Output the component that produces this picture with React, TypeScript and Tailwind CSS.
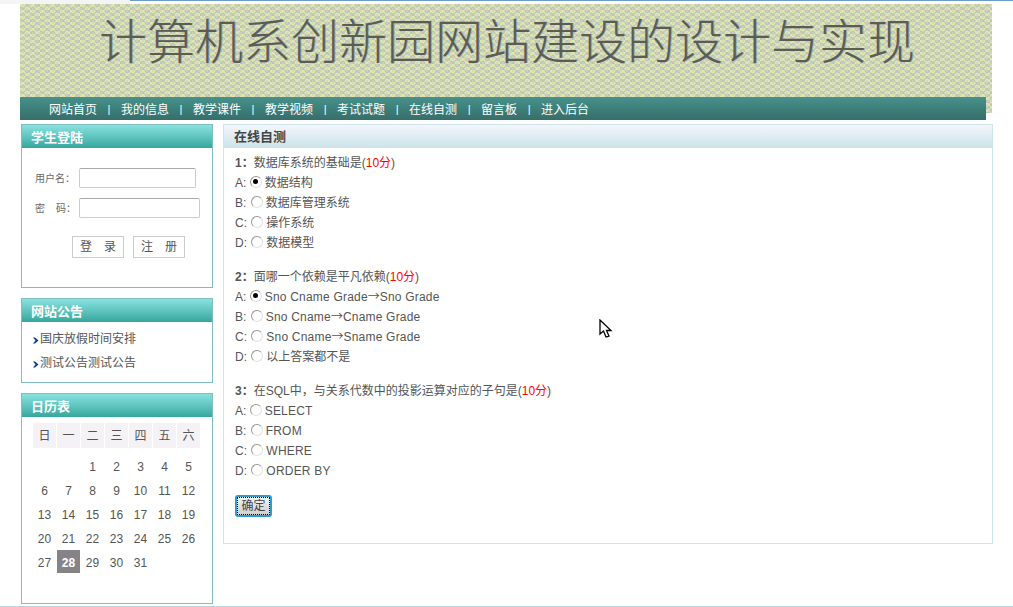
import type { ReactNode } from "react";

const font = "font-['Liberation_Sans','Noto_Sans_CJK_SC',sans-serif]";

const navItems = ["网站首页", "我的信息", "教学课件", "教学视频", "考试试题", "在线自测", "留言板", "进入后台"];

const questions = [
  {
    no: "1",
    title: "数据库系统的基础是",
    options: [
      ["A", "数据结构"],
      ["B", "数据库管理系统"],
      ["C", "操作系统"],
      ["D", "数据模型"],
    ],
  },
  {
    no: "2",
    title: "面哪一个依赖是平凡依赖",
    options: [
      ["A", "Sno Cname Grade→Sno Grade"],
      ["B", "Sno Cname→Cname Grade"],
      ["C", "Sno Cname→Sname Grade"],
      ["D", "以上答案都不是"],
    ],
  },
  {
    no: "3",
    title: "在SQL中，与关系代数中的投影运算对应的子句是",
    options: [
      ["A", "SELECT"],
      ["B", "FROM"],
      ["C", "WHERE"],
      ["D", "ORDER BY"],
    ],
  },
];

const weekDays = ["日", "一", "二", "三", "四", "五", "六"];
const days = [null, null, ...Array.from({ length: 31 }, (_, i) => i + 1)];

function SidePanel({ title, className, children }: { title: string; className: string; children: ReactNode }) {
  return (
    <section className={`border border-[#7fbfbf] ${className}`}>
      <h2 className="h-[23px] pl-[9px] text-[13px] leading-[26px] font-bold text-white bg-gradient-to-b from-[#88e2e0] to-[#33a89e]">
        {title}
      </h2>
      {children}
    </section>
  );
}

function Radio({ checked }: { checked?: boolean }) {
  return (
    <span className="inline-flex w-[12px] h-[12px] mr-[3px] -translate-y-[2px] rounded-full border border-[#999999] border-b-[#e2e2e2] border-r-[#e2e2e2] bg-white items-center justify-center align-middle">
      {checked && <span className="block w-[5px] h-[5px] rounded-full bg-black" />}
    </span>
  );
}

export default function App() {
  return (
    <div className={`relative flex flex-col min-h-[607px] bg-white text-[12px] text-[#555] ${font}`}>
      {/* top edge */}
      <div className="flex h-[4px]">
        <div className="w-[130px] bg-[#f4f4f4]" />
        <div className="flex-1 border-t-[1px] border-[#6f9cc2]" />
      </div>

      {/* banner */}
      <div className="ml-[20px] w-[972px] h-[109px] pl-[79px] pt-[11px] text-[48px] leading-[56px] font-light whitespace-nowrap text-[#5c5b54] [text-shadow:1px_0_0_rgba(90,130,170,0.45)] bg-[repeating-conic-gradient(rgba(185,185,190,0.5)_0_25%,rgba(220,236,170,0.5)_0_50%),repeating-conic-gradient(#c8ccb8_0_25%,#dfe6b4_0_50%)] bg-[length:10px_6px,4px_4px]">
        计算机系创新园网站建设的设计与实现
      </div>

      {/* nav */}
      <nav className="relative -mt-[16px] ml-[20px] w-[966px] h-[23px] pl-[29px] pt-[2px] flex items-center text-white bg-gradient-to-b from-[#46928b] to-[#366e6a]">
        {navItems.map((item, i) => (
          <span key={item} className="flex items-center">
            <span>{item}</span>
            {i < navItems.length - 1 && <span className="w-[24px] text-center text-[11px]">|</span>}
          </span>
        ))}
      </nav>

      <div className="flex mt-[4px] ml-[21px]">
        {/* left column */}
        <aside className="w-[192px] flex flex-col gap-[10px]">
          <SidePanel title="学生登陆" className="h-[164px]">
            <div className="pt-[20px] pl-[13px]">
              <div className="flex items-center h-[20px]">
                <span className="w-[44px] text-[10px] text-[#666]">用户名：</span>
                <input className="w-[117px] h-[20px] border border-[#cccccc] border-t-[#aaaaaa] rounded-[2px] bg-white" />
              </div>
              <div className="flex items-center h-[20px] mt-[10px]">
                <span className="w-[44px] text-[10px] text-[#666] whitespace-pre">密    码：</span>
                <input className="w-[121px] h-[20px] border border-[#cccccc] border-t-[#aaaaaa] rounded-[2px] bg-white" />
              </div>
              <div className="flex gap-[9px] mt-[18px] ml-[37px]">
                <button className="w-[52px] h-[22px] border border-[#cccccc] bg-white text-[#555] whitespace-pre">登　录</button>
                <button className="w-[52px] h-[22px] border border-[#cccccc] bg-white text-[#555] whitespace-pre">注　册</button>
              </div>
            </div>
          </SidePanel>

          <SidePanel title="网站公告" className="h-[85px]">
            <ul className="pt-[5px] pl-[11px]">
              {["国庆放假时间安排", "测试公告测试公告"].map((text) => (
                <li key={text} className="flex items-center h-[24px]">
                  <svg width="6" height="7" viewBox="0 0 6 7" className="mr-[1px] mt-[3px]">
                    <path d="M0 0.5 L2 0.5 L5.5 3.5 L2 6.5 L0 6.5 L2.5 3.5 Z" fill="#0a3d91" />
                  </svg>
                  {text}
                </li>
              ))}
            </ul>
          </SidePanel>

          <SidePanel title="日历表" className="h-[211px]">
            <div className="pt-[6px] pl-[11px]">
              <div className="grid grid-cols-[repeat(7,23px)] gap-[1px]">
                {weekDays.map((d) => (
                  <div key={d} className="h-[25px] flex items-center justify-center bg-[#f5f2f6] text-[#555]">
                    {d}
                  </div>
                ))}
              </div>
              <div className="grid grid-cols-[repeat(7,23px)] auto-rows-[23px] gap-[1px] mt-[6px]">
                {days.map((d, i) => (
                  <div
                    key={i}
                    className={`flex items-center justify-center pt-[2px] ${d === 28 ? "bg-[#858385] text-white font-bold" : ""}`}
                  >
                    {d}
                  </div>
                ))}
              </div>
            </div>
          </SidePanel>
        </aside>

        {/* main panel */}
        <main className="ml-[10px] w-[770px] h-[420px] border border-[#cfe5ea]">
          <h2 className="h-[23px] pl-[10px] text-[13px] leading-[24px] font-bold text-[#444] bg-gradient-to-b from-[#f3f6fc] to-[#cbe3e9]">
            在线自测
          </h2>
          <form className="pt-[5px] pl-[11px]">
            {questions.map((q) => (
              <div key={q.no} className="mb-[14px]">
                <p className="h-[20px] leading-[20px]">
                  <b>{q.no}：</b>
                  {q.title}
                  <span>(</span>
                  <span className="text-[#f00]">10分</span>
                  <span>)</span>
                </p>
                {q.options.map(([letter, text], i) => (
                  <div key={letter} className="h-[20px] leading-[20px] whitespace-nowrap">
                    <span className={letter === "A" ? "" : "mr-[1px]"}>{letter}:</span> <Radio checked={i === 0 && q.no !== "3"} />
                    <span className={/[A-Z]/.test(text) ? "tracking-[0.2px]" : ""}>
                      {text.split("→").map((part, n) => (
                        <span key={n}>
                          {n > 0 && <span className="font-['Noto_Sans_CJK_SC',sans-serif] tracking-normal leading-[0]">→</span>}
                          {part}
                        </span>
                      ))}
                    </span>
                  </div>
                ))}
              </div>
            ))}
            <button
              type="button"
              className="block w-[37px] h-[22px] mt-[1px] rounded-[3px] border-2 border-[#2f9ad6] outline-1 outline-dotted -outline-offset-3 outline-black bg-gradient-to-b from-[#f2f2f2] to-[#cfcfcf] text-[#444] text-center leading-[18px]"
            >
              确定
            </button>
          </form>
        </main>
      </div>

      {/* mouse pointer caught in the screenshot */}
      <svg width="14" height="20" viewBox="0 0 14 20" className="absolute left-[599px] top-[319px]">
        <path d="M1 1 L1 15 L4.5 12 L7 18 L10 17 L7.5 11.5 L12 11.5 Z" fill="#fff" stroke="#000" strokeWidth="1.3" />
      </svg>

      {/* bottom edge */}
      <div className="mt-auto h-[1px] bg-[#b7d6df]" />
    </div>
  );
}
